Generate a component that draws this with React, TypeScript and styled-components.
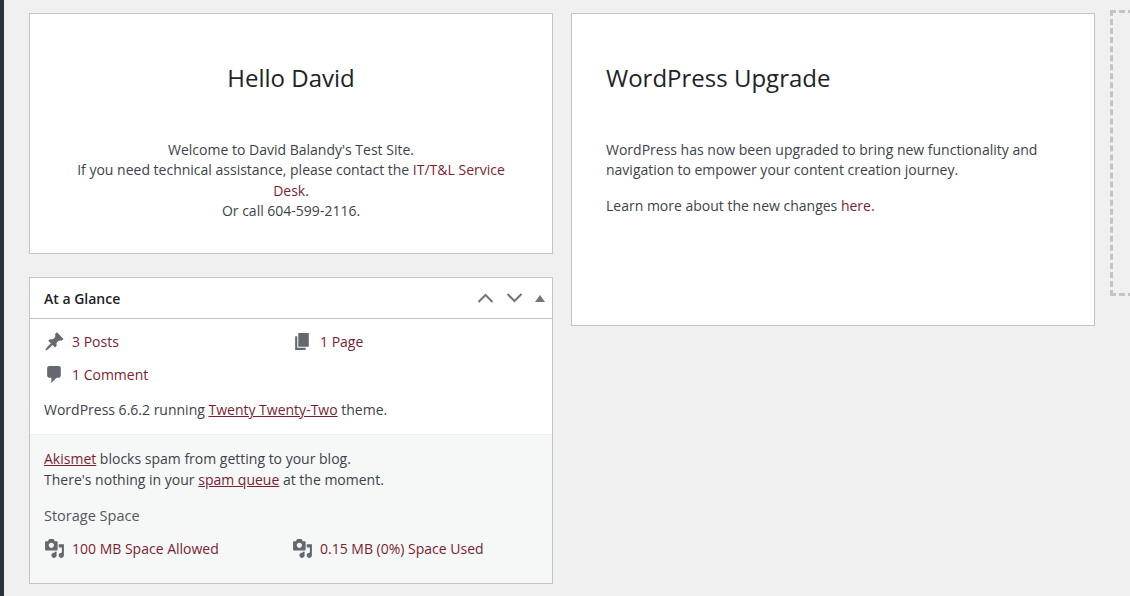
import React from "react";
import styled, { createGlobalStyle } from "styled-components";

const GlobalStyle = createGlobalStyle`
    html, body {
        margin: 0;
        padding: 0;
        background: #f0f0f1;
    }
    body {
        font-family: "Open Sans", "Liberation Sans", sans-serif;
        font-size: 13.5px;
        color: #3c434a;
        overflow: hidden;
    }
`;

const Page = styled.div`
    display: flex;
    width: 1130px;
    height: 596px;
    overflow: hidden;
`;

const AdminMenu = styled.div`
    width: 4px;
    flex: none;
    background: #2c3338;
`;

const Columns = styled.div`
    display: flex;
    gap: 18px;
    padding: 13px 0 0 25px;
`;

const Column = styled.div`
    width: 524px;
    flex: none;
    display: flex;
    flex-direction: column;
    gap: 23px;
`;

const EmptyZone = styled.div`
    width: 60px;
    height: 286px;
    flex: none;
    box-sizing: border-box;
    margin: -3px 0 0 -3px;
    border: 3px dashed #c3c4c7;
`;

const Panel = styled.section`
    box-sizing: border-box;
    background: #fff;
    border: 1px solid #c3c4c7;
`;

const NoticePanel = styled(Panel)<{ $height: number; $center?: boolean }>`
    height: ${(p) => p.$height}px;
    padding: 47px 34px 0;
    text-align: ${(p) => (p.$center ? "center" : "left")};
`;

const NoticeTitle = styled.h2`
    margin: 0 0 45px;
    font-size: 24px;
    line-height: 34px;
    font-weight: 400;
    color: #1d2327;
`;

const NoticeText = styled.p`
    margin: 0 0 15px;
    font-size: 14px;
    line-height: 20.4px;
    color: #3c434a;
`;

const Link = styled.a`
    color: #7b1e32;
    text-decoration: none;
`;

const UnderLink = styled(Link)`
    text-decoration: underline;
`;

const PanelHeader = styled.div`
    height: 40px;
    display: flex;
    align-items: center;
    justify-content: space-between;
    padding: 0 7px 0 14px;
    border-bottom: 1px solid #c3c4c7;
`;

const PanelTitle = styled.h3`
    margin: 0;
    font-size: 14px;
    font-weight: 600;
    color: #1d2327;
`;

const HeaderButtons = styled.div`
    display: flex;
    align-items: center;
    gap: 12px;
    color: #6b7680;
`;

const GlanceBody = styled.div`
    padding: 12px 14px 14px;
`;

const StatGrid = styled.div`
    display: grid;
    grid-template-columns: 248px 1fr;
    row-gap: 13px;
    margin-bottom: 16px;
`;

const Stat = styled.div`
    display: flex;
    align-items: center;
    gap: 7px;
    height: 20px;
    font-size: 14px;
`;

const StatIcon = styled.svg`
    width: 21px;
    height: 21px;
    flex: none;
    fill: #646970;
`;

const VersionLine = styled.p`
    margin: 0;
    font-size: 14px;
    line-height: 20px;
`;

const SpamBlock = styled.div`
    background: #f6f7f7;
    border-top: 1px solid #f0f0f1;
    padding: 13px 14px 25px;
    font-size: 14px;
`;

const SpamText = styled.p`
    margin: 0 0 16px;
    line-height: 21px;
`;

const StorageTitle = styled.h4`
    margin: 0 0 12px;
    font-size: 14.5px;
    line-height: 20px;
    font-weight: 400;
    color: #50575e;
`;

const StorageGrid = styled.div`
    display: grid;
    grid-template-columns: 248px 1fr;
`;

const pinPath =
    "M10.44 3.02l1.82-1.82 6.36 6.35-1.83 1.82c-1.05-.68-2.48-.57-3.41.36l-.75.75c-.92.93-1.04 2.35-.35 3.41l-1.83 1.82-2.41-2.41-2.8 2.79c-.42.42-3.38 2.71-3.8 2.29s1.86-3.39 2.28-3.81l2.79-2.79L4.1 9.36l1.83-1.82c1.05.69 2.48.57 3.4-.36l.75-.75c.93-.92 1.05-2.35.36-3.41z";
const pagePath = "M6 15V2h10v13H6zm-1 1h8v2H3V5h2v11z";
const commentPath =
    "M5 2h9c1.1 0 2 .9 2 2v7c0 1.1-.9 2-2 2h-2l-5 5v-5H5c-1.1 0-2-.9-2-2V4c0-1.1.9-2 2-2z";
const mediaPath =
    "M13 11V4c0-.55-.45-1-1-1h-1.67L9 1H5L3.67 3H2c-.55 0-1 .45-1 1v7c0 .55.45 1 1 1h10c.55 0 1-.45 1-1zM7 4.5c1.38 0 2.5 1.12 2.5 2.5S8.38 9.5 7 9.5 4.5 8.38 4.5 7 5.62 4.5 7 4.5zM14 6h5v10.5c0 1.38-1.12 2.5-2.5 2.5S14 17.88 14 16.5s1.12-2.5 2.5-2.5c.17 0 .34.02.5.05V9h-3V6zm-4 8.05V13h2v3.5c0 1.38-1.12 2.5-2.5 2.5S7 17.88 7 16.5 8.12 14 9.5 14c.17 0 .34.02.5.05z";

const Icon = ({ d }: { d: string }) => (
    <StatIcon viewBox="0 0 20 20">
        <path d={d} />
    </StatIcon>
);

const Chevron = ({ up }: { up?: boolean }) => (
    <svg width="17" height="10" viewBox="0 0 17 10" fill="none" stroke="currentColor" strokeWidth="2">
        <path d={up ? "M1.5 9l7-7 7 7" : "M1.5 1l7 7 7-7"} />
    </svg>
);

const Triangle = () => (
    <svg width="10" height="7" viewBox="0 0 10 7" fill="currentColor">
        <path d="M5 0l5 7H0z" />
    </svg>
);

export default function App() {
    return (
        <Page>
            <GlobalStyle />
            <AdminMenu />
            <Columns>
                <Column>
                    <NoticePanel $height={241} $center>
                        <NoticeTitle>Hello David</NoticeTitle>
                        <NoticeText>
                            Welcome to David Balandy's Test Site.
                            <br />
                            If you need technical assistance, please contact the <Link href="#">IT/T&amp;L Service Desk</Link>.
                            <br />
                            Or call 604-599-2116.
                        </NoticeText>
                    </NoticePanel>
                    <Panel>
                        <PanelHeader>
                            <PanelTitle>At a Glance</PanelTitle>
                            <HeaderButtons>
                                <Chevron up />
                                <Chevron />
                                <Triangle />
                            </HeaderButtons>
                        </PanelHeader>
                        <GlanceBody>
                            <StatGrid>
                                <Stat>
                                    <Icon d={pinPath} />
                                    <Link href="#">3 Posts</Link>
                                </Stat>
                                <Stat>
                                    <Icon d={pagePath} />
                                    <Link href="#">1 Page</Link>
                                </Stat>
                                <Stat>
                                    <Icon d={commentPath} />
                                    <Link href="#">1 Comment</Link>
                                </Stat>
                            </StatGrid>
                            <VersionLine>
                                WordPress 6.6.2 running <UnderLink href="#">Twenty Twenty-Two</UnderLink> theme.
                            </VersionLine>
                        </GlanceBody>
                        <SpamBlock>
                            <SpamText>
                                <UnderLink href="#">Akismet</UnderLink> blocks spam from getting to your blog.
                                <br />
                                There's nothing in your <UnderLink href="#">spam queue</UnderLink> at the moment.
                            </SpamText>
                            <StorageTitle>Storage Space</StorageTitle>
                            <StorageGrid>
                                <Stat>
                                    <Icon d={mediaPath} />
                                    <Link href="#">100 MB Space Allowed</Link>
                                </Stat>
                                <Stat>
                                    <Icon d={mediaPath} />
                                    <Link href="#">0.15 MB (0%) Space Used</Link>
                                </Stat>
                            </StorageGrid>
                        </SpamBlock>
                    </Panel>
                </Column>
                <Column>
                    <NoticePanel $height={313}>
                        <NoticeTitle>WordPress Upgrade</NoticeTitle>
                        <NoticeText>
                            WordPress has now been upgraded to bring new functionality and navigation to empower your
                            content creation journey.
                        </NoticeText>
                        <NoticeText>
                            Learn more about the new changes <Link href="#">here</Link>.
                        </NoticeText>
                    </NoticePanel>
                </Column>
                <EmptyZone />
            </Columns>
        </Page>
    );
}
